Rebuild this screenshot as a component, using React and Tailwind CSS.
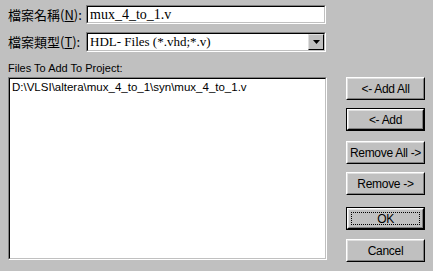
const sans = "font-['Liberation_Sans','Noto_Sans_CJK_TC',sans-serif]"
const cjk = "font-['Noto_Sans_CJK_TC','Liberation_Sans',sans-serif]"
const serif = "font-['Liberation_Serif','Noto_Sans_CJK_TC',serif]"

// classic sunken edit border: gray/white outer, black/silver inner
function Sunken({ className, children }) {
  return (
    <div className={`border border-t-[#808080] border-l-[#808080] border-r-white border-b-white ${className}`}>
      <div className="h-full w-full border border-t-black border-l-black border-r-[#c0c0c0] border-b-[#c0c0c0] bg-white">
        {children}
      </div>
    </div>
  )
}

function Button({ label, focused, def, className }) {
  const inner = (
    <div className="h-full w-full border border-t-white border-l-white border-r-black border-b-black">
      <div className="h-full w-full border border-t-[#dfdfdf] border-l-[#dfdfdf] border-r-[#808080] border-b-[#808080] flex items-center justify-center p-[2px]">
        <div
          className={`h-full w-full flex items-center justify-center whitespace-nowrap text-[12px] tracking-[-0.3px] text-black ${sans} ${
            focused ? 'border border-dotted border-black' : ''
          }`}
        >
          {label}
        </div>
      </div>
    </div>
  )
  return (
    <div className={`w-[79px] h-[23px] ${def ? 'border border-black' : ''} ${className}`}>{inner}</div>
  )
}

export default function App() {
  return (
    <div className="w-[433px] h-[271px] bg-[#c0c0c0] overflow-hidden flex flex-col pl-[8px] pt-[5px]">
      <div className="flex items-center h-[19px]">
        <div className={`w-[78px] text-[13px] text-black ${cjk}`}>
          檔案名稱(<span className="underline">N</span>):
        </div>
        <Sunken className="w-[240px] h-[19px]">
          <div className={`pl-[2px] text-[14px] leading-[15px] text-black ${serif}`}>mux_4_to_1.v</div>
        </Sunken>
      </div>

      <div className="flex items-center h-[20px] mt-[8px]">
        <div className={`w-[78px] text-[13px] text-black ${cjk}`}>
          檔案類型(<span className="underline">T</span>):
        </div>
        <Sunken className="w-[240px] h-[20px]">
          <div className="flex h-full items-center">
            <div className={`flex-1 pl-[2px] text-[13px] leading-[16px] text-black ${serif}`}>HDL- Files (*.vhd;*.v)</div>
            <div className="w-[16px] h-[16px] bg-[#c0c0c0] border border-t-[#dfdfdf] border-l-[#dfdfdf] border-r-black border-b-black flex items-center justify-center">
              <svg width="7" height="4" viewBox="0 0 7 4">
                <path d="M0 0h7L3.5 4z" fill="black" />
              </svg>
            </div>
          </div>
        </Sunken>
      </div>

      <div className={`mt-[9px] text-[11px] leading-[14px] text-black ${sans}`}>Files To Add To Project:</div>

      <div className="flex mt-[2px]">
        <Sunken className="w-[319px] h-[183px]">
          <div className={`pl-[2px] pt-[1px] text-[11.5px] leading-[14px] text-black ${sans}`}>
            D:\VLSI\altera\mux_4_to_1\syn\mux_4_to_1.v
          </div>
        </Sunken>
        <div className="flex flex-col ml-[19px]">
          <Button label="<- Add All" />
          <Button label="<- Add" def className="mt-[8px]" />
          <Button label="Remove All ->" className="mt-[10px]" />
          <Button label="Remove ->" className="mt-[8px]" />
          <Button label="OK" def focused className="mt-[12px]" />
          <Button label="Cancel" className="mt-[9px]" />
        </div>
      </div>
    </div>
  )
}
